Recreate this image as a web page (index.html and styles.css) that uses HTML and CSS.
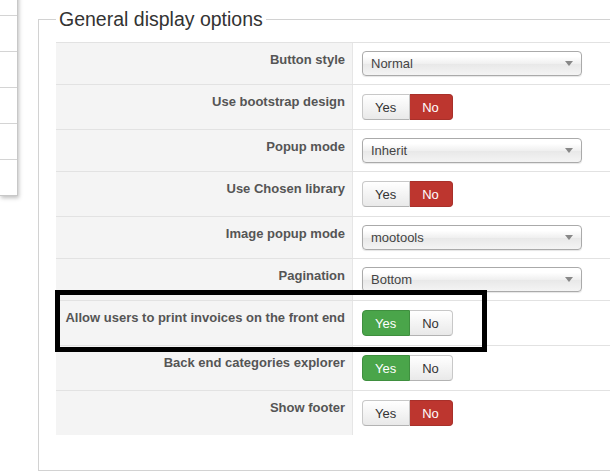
FILE: index.html
```html
<!DOCTYPE html>
<html lang="en">
<head>
  <meta charset="UTF-8">
  <meta name="viewport" content="width=device-width, initial-scale=1.0">
  <title>Options</title>
  <link rel="stylesheet" href="styles.css">
</head>
<body>
  <div class="page">
    <ul class="side-list">
      <li></li>
      <li></li>
      <li></li>
      <li></li>
      <li></li>
      <li></li>
    </ul>

    <div class="main">
      <fieldset class="options">
        <legend>General display options</legend>

        <div class="row">
          <div class="label">Button style</div>
          <div class="control">
            <div class="select"><span>Normal</span><i class="caret"></i></div>
          </div>
        </div>

        <div class="row">
          <div class="label">Use bootstrap design</div>
          <div class="control toggle-cell">
            <div class="btn-group">
              <span class="btn">Yes</span>
              <span class="btn btn-no active">No</span>
            </div>
          </div>
        </div>

        <div class="row">
          <div class="label">Popup mode</div>
          <div class="control">
            <div class="select"><span>Inherit</span><i class="caret"></i></div>
          </div>
        </div>

        <div class="row">
          <div class="label">Use Chosen library</div>
          <div class="control toggle-cell">
            <div class="btn-group">
              <span class="btn">Yes</span>
              <span class="btn btn-no active">No</span>
            </div>
          </div>
        </div>

        <div class="row">
          <div class="label">Image popup mode</div>
          <div class="control">
            <div class="select"><span>mootools</span><i class="caret"></i></div>
          </div>
        </div>

        <div class="row">
          <div class="label">Pagination</div>
          <div class="control">
            <div class="select"><span>Bottom</span><i class="caret"></i></div>
          </div>
        </div>

        <div class="row marked">
          <div class="label">Allow users to print invoices on the front end</div>
          <div class="control toggle-cell">
            <div class="btn-group">
              <span class="btn btn-yes active">Yes</span>
              <span class="btn">No</span>
            </div>
          </div>
          <div class="mark-box"></div>
        </div>

        <div class="row">
          <div class="label">Back end categories explorer</div>
          <div class="control toggle-cell">
            <div class="btn-group">
              <span class="btn btn-yes active">Yes</span>
              <span class="btn">No</span>
            </div>
          </div>
        </div>

        <div class="row last">
          <div class="label">Show footer</div>
          <div class="control toggle-cell">
            <div class="btn-group">
              <span class="btn">Yes</span>
              <span class="btn btn-no active">No</span>
            </div>
          </div>
        </div>
      </fieldset>
    </div>
  </div>
</body>
</html>
```

FILE: styles.css
```css
body {
  margin: 0;
  font-family: "Liberation Sans", Arial, sans-serif;
  background: #fff;
  color: #333;
  overflow: hidden;
}
.page {
  display: flex;
  align-items: flex-start;
}

/* side menu, mostly scrolled out of view */
.side-list {
  list-style: none;
  margin: -20px 0 0;
  padding: 0;
  width: 18px;
  flex-shrink: 0;
  box-sizing: border-box;
  background: #fff;
  border-right: 1px solid #c8c8c8;
  box-shadow: 1px 2px 4px rgba(0, 0, 0, 0.25);
}
.side-list li {
  height: 35px;
  border-bottom: 1px solid #d4d4d4;
}
.side-list li:last-child {
  border-bottom-color: #c8c8c8;
}

.main {
  margin-left: 20px;
}
.options {
  width: 640px;
  margin: 9px 0 0;
  padding: 13px 0 35px 17px;
  border: 1px solid #d2d2d2;
  border-right: none;
}
.options legend {
  margin: 0;
  padding: 0 3px;
  font-size: 19.5px;
  line-height: 20px;
  color: #333;
}

/* form rows */
.row {
  display: flex;
  border-top: 1px solid #e2e2e2;
}
.label {
  width: 297px;
  flex-shrink: 0;
  box-sizing: border-box;
  padding: 8px 7px 0;
  background: #f4f4f4;
  border-right: 1px solid #e6e6e6;
  text-align: right;
  font-size: 13px;
  line-height: 18px;
  font-weight: bold;
  color: #555;
}
.control {
  flex: 1;
  padding: 8px 9px;
}
.control.toggle-cell {
  padding: 9px 9px;
}

/* chosen-like select */
.select {
  width: 220px;
  height: 25px;
  box-sizing: border-box;
  display: flex;
  align-items: center;
  justify-content: space-between;
  padding: 0 8px;
  border: 1px solid #aaa;
  border-radius: 4px;
  background: linear-gradient(#fff 20%, #f0f0f0 50%, #e8e8e8 52%, #f4f4f4);
  box-shadow: 0 1px 1px rgba(0, 0, 0, 0.1);
  font-size: 13px;
  color: #444;
}
.caret {
  width: 0;
  height: 0;
  border-left: 4px solid transparent;
  border-right: 4px solid transparent;
  border-top: 5px solid #888;
}

/* yes / no switch */
.btn-group {
  display: inline-flex;
  height: 26px;
}
.btn {
  display: flex;
  align-items: center;
  padding: 0 13px 0 12px;
  font-size: 13px;
  color: #333;
  border: 1px solid #c8c8c8;
  border-bottom-color: #b3b3b3;
  background: linear-gradient(#fff, #e9e9e9);
}
.btn:first-child {
  border-radius: 4px 0 0 4px;
}
.btn:last-child {
  border-radius: 0 4px 4px 0;
  border-left: none;
}
.btn-no.active {
  background: #bd362f;
  border-color: #a8302a;
  color: #fff;
}
.btn-yes.active {
  background: #4aa54a;
  border-color: #3f8f3f;
  color: #fff;
}

/* black frame drawn over the print-invoices row */
.marked {
  position: relative;
}
.mark-box {
  position: absolute;
  top: -11px;
  left: -1px;
  width: 432px;
  height: 62px;
  box-sizing: border-box;
  border: 5px solid #000;
}
```
